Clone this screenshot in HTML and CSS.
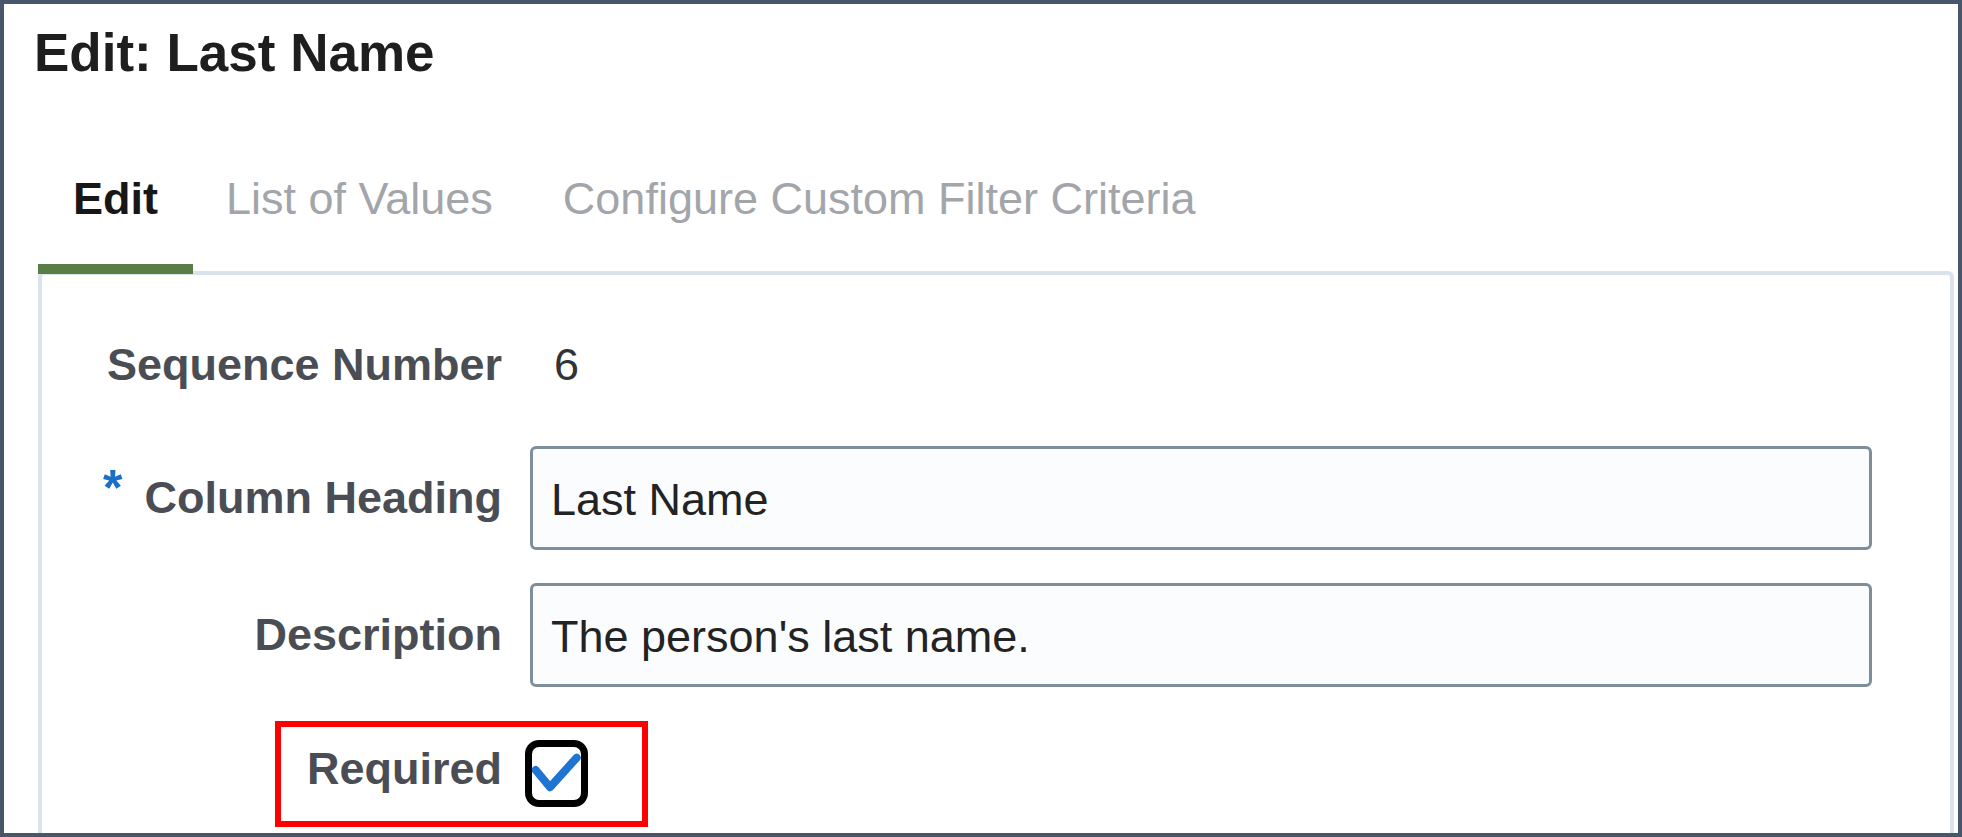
FILE: index.html
```html
<!DOCTYPE html>
<html lang="en">
<head>
<meta charset="utf-8">
<title>Edit: Last Name</title>
<link rel="stylesheet" href="styles.css">
</head>
<body>
<div class="dialog">
  <h1 class="title">Edit: Last Name</h1>
  <div class="tabs">
    <div class="tab active">Edit</div>
    <div class="tab tab-mid">List of Values</div>
    <div class="tab">Configure Custom Filter Criteria</div>
  </div>
  <div class="panel">
    <div class="field seq">
      <span class="label">Sequence Number</span>
      <span class="value">6</span>
    </div>
    <div class="field gap-lg">
      <label class="label" for="heading"><span class="req">*</span>Column Heading</label>
      <input class="input" id="heading" type="text" value="Last Name" readonly>
    </div>
    <div class="field gap-sm">
      <label class="label" for="desc">Description</label>
      <input class="input" id="desc" type="text" value="The person's last name." readonly>
    </div>
    <div class="field check-row">
      <span class="highlight"></span>
      <span class="label label-check">Required</span>
      <span class="checkbox">
        <svg width="49" height="53" viewBox="0 0 49 53" aria-hidden="true">
          <polyline points="3.7,23 18,40.2 44.7,10.7" fill="none" stroke="#1f74d1" stroke-width="8" stroke-linecap="round" stroke-linejoin="round"/>
        </svg>
      </span>
    </div>
  </div>
</div>
</body>
</html>
```

FILE: styles.css
```css
html, body {
  margin: 0;
  padding: 0;
  background: #ffffff;
}

body {
  font-family: "Liberation Sans", Arial, sans-serif;
}

.dialog {
  box-sizing: border-box;
  width: 1962px;
  height: 837px;
  border: 4px solid #48566b;
  padding: 19px 0 0 28px;
  display: flex;
  flex-direction: column;
  overflow: hidden;
  background: #ffffff;
}

.title {
  margin: 0 0 0 2px;
  font-size: 53px;
  line-height: 60px;
  font-weight: 700;
  color: #1e1e1e;
}

.tabs {
  display: flex;
  margin: 90px 0 -3px 6px;
  position: relative;
  z-index: 1;
}

.tab {
  font-size: 45px;
  line-height: 52px;
  padding: 0 33px 39px;
  border-bottom: 10px solid transparent;
  color: #a2a5a9;
  white-space: nowrap;
}

.tab.active {
  padding: 0 35px 39px 35px;
  font-weight: 700;
  color: #171717;
  border-bottom-color: #5a7d48;
}

.tab.tab-mid {
  padding-right: 37px;
}

.panel {
  flex: 1;
  margin: 0 4px 0 6px;
  border: 4px solid #dae3ec;
  border-bottom: 0;
  border-radius: 6px 6px 0 0;
  padding: 64px 78px 0 0;
  background: #ffffff;
}

.field {
  display: flex;
  align-items: center;
  gap: 28px;
}

.label {
  flex: none;
  width: 460px;
  text-align: right;
  font-size: 45px;
  line-height: 52px;
  font-weight: 700;
  color: #4a4e54;
  white-space: nowrap;
}

.req {
  font-size: 50px;
  line-height: 0;
  vertical-align: 8px;
  color: #1a6fc7;
  margin-right: 22px;
}

.value {
  font-size: 45px;
  line-height: 52px;
  color: #333333;
  padding-left: 24px;
}

.gap-lg {
  margin-top: 55px;
}

.gap-sm {
  margin-top: 33px;
}

.input {
  flex: none;
  box-sizing: border-box;
  width: 1342px;
  height: 104px;
  margin: 0;
  padding: 4px 16px 0 18px;
  border: 3px solid #7e8f9b;
  border-radius: 6px;
  background: #fbfcfe;
  font-family: "Liberation Sans", Arial, sans-serif;
  font-size: 45px;
  color: #232323;
  outline: none;
}

.check-row {
  position: relative;
  align-items: flex-start;
  margin-top: 53px;
}

.label-check {
  margin-top: 3px;
}

.checkbox {
  flex: none;
  box-sizing: border-box;
  width: 63px;
  height: 67px;
  margin-left: -5px;
  border: 7px solid #000000;
  border-radius: 14px;
  background: #ffffff;
  display: flex;
}

.highlight {
  position: absolute;
  left: 233px;
  top: -19px;
  width: 373px;
  height: 106px;
  box-sizing: border-box;
  border: 6px solid #ff0000;
}
```
